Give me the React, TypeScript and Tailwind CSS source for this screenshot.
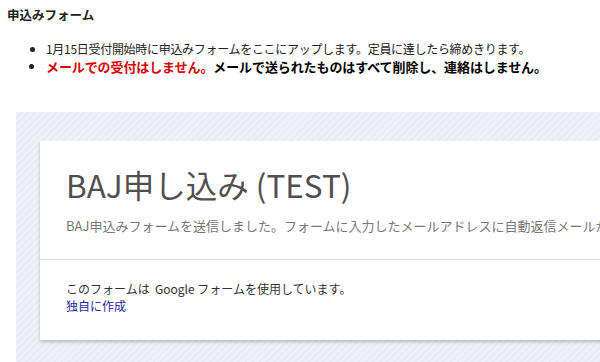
import React from "react";

export default function App() {
  const jp = { fontFamily: '"Noto Sans CJK JP", "Noto Sans", sans-serif' };
  return (
    <div className="w-[600px] h-[362px] overflow-hidden bg-white relative" style={jp}>
      <div className="pl-[7px] pt-[6px] text-[12.5px] leading-[18px] font-bold text-[#222]">申込みフォーム</div>
      <ul className="mt-[16px] pl-[46px] text-[12px] leading-[18px] list-disc text-[#222]">
        <li className="tracking-[-0.3px]">1月15日受付開始時に申込みフォームをここにアップします。定員に達したら締めきります。</li>
        <li className="font-bold text-[13px] tracking-[-0.1px]">
          <span className="text-[#dd0000]">メールでの受付はしません。</span>
          <span className="text-black">メールで送られたものはすべて削除し、連絡はしません。</span>
        </li>
      </ul>
      <div className="mt-[36px] ml-[16px] w-[640px] h-[260px] pt-[29px] pl-[24px] bg-[#edf0f8] bg-[repeating-linear-gradient(135deg,#eef1f8_0px,#eef1f8_3px,#e9ecf5_3px,#e9ecf5_5px)]">
        <div className="w-[600px] bg-white shadow-[0_2px_3px_rgba(0,0,0,0.22)]">
          <div className="pl-[26px] pt-[23px] pb-[24px] border-b border-[#dcdcdc]">
            <div className="text-[31.5px] leading-[40px] text-[#505050]">BAJ申し込み (TEST)</div>
            <div className="mt-[13px] text-[13px] leading-[18px] text-[#777] whitespace-nowrap">
              BAJ申込みフォームを送信しました。フォームに入力したメールアドレスに自動返信メールが
            </div>
          </div>
          <div className="pl-[26px] pt-[20px] pb-[26px] text-[12px] leading-[17px]">
            <div className="text-[#333]">このフォームは&nbsp; Google フォームを使用しています。</div>
            <div className="text-[#1f1fa8]">独自に作成</div>
          </div>
        </div>
      </div>
    </div>
  );
}
